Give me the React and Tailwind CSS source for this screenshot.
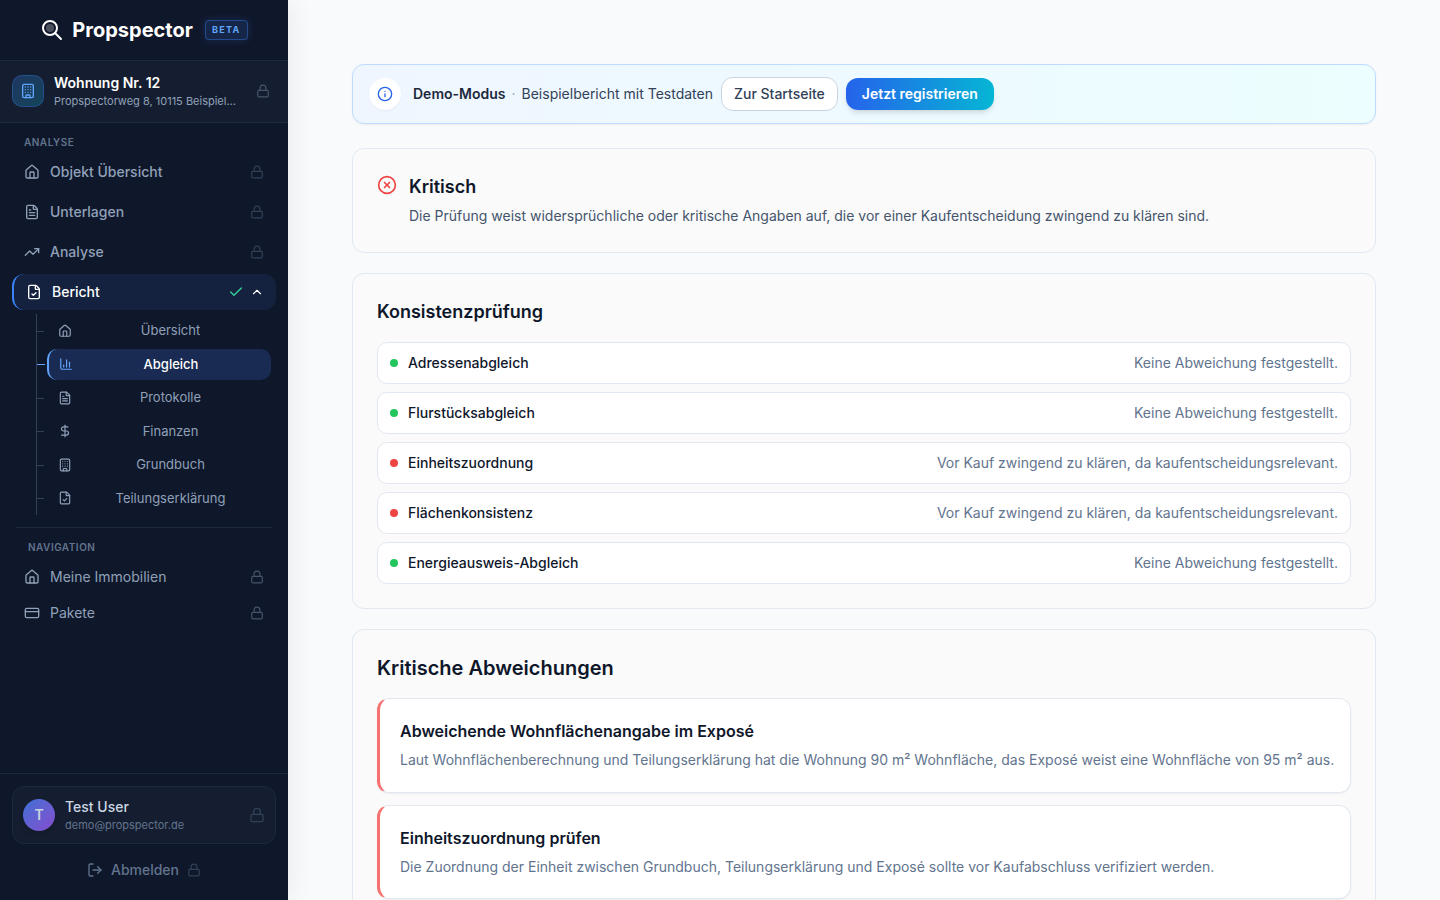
import {
  Building, ChartColumn, Check, ChevronUp, CircleX, CreditCard, DollarSign,
  FileCheck, FileText, House, Info, Lock, LogOut, TrendingUp,
} from 'lucide-react'
import clsx from 'clsx'

const ANALYSE_ITEMS = [
  { label: 'Objekt Übersicht', icon: House },
  { label: 'Unterlagen', icon: FileText },
  { label: 'Analyse', icon: TrendingUp },
]

const REPORT_ITEMS = [
  { label: 'Übersicht', icon: House },
  { label: 'Abgleich', icon: ChartColumn, active: true },
  { label: 'Protokolle', icon: FileText },
  { label: 'Finanzen', icon: DollarSign },
  { label: 'Grundbuch', icon: Building },
  { label: 'Teilungserklärung', icon: FileCheck },
]

const NAV_ITEMS = [
  { label: 'Meine Immobilien', icon: House },
  { label: 'Pakete', icon: CreditCard },
]

const OK_TEXT = 'Keine Abweichung festgestellt.'
const CRITICAL_TEXT = 'Vor Kauf zwingend zu klären, da kaufentscheidungsrelevant.'

const CHECKS = [
  { label: 'Adressenabgleich', ok: true },
  { label: 'Flurstücksabgleich', ok: true },
  { label: 'Einheitszuordnung', ok: false },
  { label: 'Flächenkonsistenz', ok: false },
  { label: 'Energieausweis-Abgleich', ok: true },
]

const DEVIATIONS = [
  {
    title: 'Abweichende Wohnflächenangabe im Exposé',
    text: 'Laut Wohnflächenberechnung und Teilungserklärung hat die Wohnung 90 m² Wohnfläche, das Exposé weist eine Wohnfläche von 95 m² aus.',
  },
  {
    title: 'Einheitszuordnung prüfen',
    text: 'Die Zuordnung der Einheit zwischen Grundbuch, Teilungserklärung und Exposé sollte vor Kaufabschluss verifiziert werden.',
  },
]

function Logo() {
  return (
    <svg width="24" height="24" viewBox="0 0 24 24" fill="none" className="shrink-0">
      <circle cx="10" cy="10" r="7" stroke="white" strokeWidth="2" />
      <circle cx="10" cy="10" r="4" fill="white" fillOpacity="0.25" />
      <path d="M15 15l6 6" stroke="white" strokeWidth="2" strokeLinecap="round" />
    </svg>
  )
}

function NavItem({ label, icon: Icon, className, lockClass }) {
  return (
    <button type="button" className={clsx('flex h-9 w-full items-center gap-2.5 rounded-xl px-3 text-sm text-slate-400', className)}>
      <Icon size={16} className="shrink-0" />
      <span className="flex-1 text-left">{label}</span>
      <Lock size={14} className={clsx('shrink-0', lockClass)} />
    </button>
  )
}

function ReportItem({ label, icon: Icon, active }) {
  return (
    <li
      className={clsx(
        'relative before:absolute before:top-1/2 before:left-0 before:h-px',
        active ? 'pl-2.5 before:w-2 before:bg-[#60a5fa]' : 'pl-[9px] before:w-[7px] before:bg-slate-700',
      )}
    >
      <button
        type="button"
        className={clsx(
          'flex w-full items-center gap-2.5 rounded-[10px] py-1.5 pr-3 text-[13px] leading-[1.5]',
          active
            ? 'border-l-2 border-[#60a5fa] bg-[#192b52] pl-2.5 font-medium text-white'
            : 'pl-3 text-slate-400',
        )}
      >
        <Icon size={14} className={clsx('shrink-0', active && 'text-[#60a5fa]')} />
        <span className="flex-1 text-center">{label}</span>
      </button>
    </li>
  )
}

function Sidebar() {
  return (
    <aside className="z-10 flex w-72 shrink-0 flex-col bg-[#0f172a] shadow-[4px_0_24px_rgba(0,0,0,0.06)]">
      <div className="flex h-[61px] items-center justify-center gap-2 border-b border-slate-800">
        <Logo />
        <span className="text-xl font-bold text-white">Propspector</span>
        <span className="ml-1 rounded border border-[#3b82f6]/40 bg-[#3b82f6]/15 px-1.5 py-0.5 text-[9px] leading-[14px] font-bold tracking-[0.15em] text-[#60a5fa] shadow-[0_0_8px_rgba(59,130,246,0.2)]">
          BETA
        </span>
      </div>

      {/* Current property */}
      <div className="flex h-[62px] items-center gap-2.5 border-b border-slate-800 bg-[#151e30] px-3 pb-px">
        <div className="flex size-8 shrink-0 items-center justify-center rounded-[10px] border border-[#3b82f6]/30 bg-linear-to-br from-[#3b82f6]/25 to-[#06b6d4]/25 text-[#60a5fa]">
          <Building size={16} />
        </div>
        <div className="min-w-0 flex-1">
          <p className="text-sm leading-5 font-semibold text-white">Wohnung Nr. 12</p>
          <p className="text-[11px] leading-4 whitespace-nowrap text-slate-400">Propspectorweg 8, 10115 Beispiel…</p>
        </div>
        <Lock size={14} className="mx-1.5 shrink-0 text-slate-600" />
      </div>

      <nav className="flex-1 px-3 pt-[11px]">
        <p className="px-3 text-[10px] leading-4 font-semibold tracking-wider text-slate-500">ANALYSE</p>
        <div className="mt-1 flex flex-col gap-1">
          {ANALYSE_ITEMS.map(item => (
            <NavItem key={item.label} {...item} className="font-medium" lockClass="text-slate-700" />
          ))}
          <button type="button" className="flex h-9 w-full items-center rounded-xl border-l-2 border-[#3b82f6] bg-[#142240] px-3 text-sm font-medium text-white">
            <FileCheck size={16} className="shrink-0" />
            <span className="ml-2.5 flex-1 text-left">Bericht</span>
            <Check size={16} className="mr-1.5 text-[#34d399]" />
            <ChevronUp size={14} />
          </button>
        </div>
        <ul className="mt-1 mr-[5px] ml-6 flex flex-col gap-0.5 border-l border-slate-700 py-px">
          {REPORT_ITEMS.map(item => (
            <ReportItem key={item.label} {...item} />
          ))}
        </ul>

        <div className="mx-1 mt-3 border-t border-slate-800 px-3 pt-[11px]">
          <p className="text-[10px] leading-4 font-semibold tracking-wider text-slate-500">NAVIGATION</p>
        </div>
        <div className="mt-1 flex flex-col">
          {NAV_ITEMS.map(item => (
            <NavItem key={item.label} {...item} lockClass="text-slate-600" />
          ))}
        </div>
      </nav>

      {/* User */}
      <div className="border-t border-slate-800 p-3">
        <div className="flex h-[58px] items-center gap-2.5 rounded-xl border border-slate-800 bg-[#151e30] px-2.5">
          <div className="flex size-8 shrink-0 items-center justify-center rounded-full bg-linear-to-br from-[#3470d4] to-[#834bd0] text-sm font-semibold text-slate-300 shadow-md">
            T
          </div>
          <div className="min-w-0 flex-1">
            <p className="text-sm leading-5 font-medium text-slate-300">Test User</p>
            <p className="truncate text-[11px] leading-4 text-slate-500">demo@propspector.de</p>
          </div>
          <Lock size={16} className="shrink-0 text-slate-700" />
        </div>
        <button type="button" className="mt-2 flex h-9 w-full items-center justify-center gap-2 text-sm font-medium text-slate-500">
          <LogOut size={16} />
          Abmelden
          <Lock size={14} className="text-slate-700" />
        </button>
      </div>
    </aside>
  )
}

function DemoBanner() {
  return (
    <div className="flex items-center rounded-xl border border-[#bfdbfe] bg-linear-to-r from-[#eff6ff] to-[#ecfeff] px-4 py-3 text-sm shadow-xs">
      <div className="mr-3 flex size-8 shrink-0 items-center justify-center rounded-full bg-white text-[#2563eb] shadow-xs">
        <Info size={16} />
      </div>
      <p className="mr-2 text-slate-700">
        <span className="font-semibold text-slate-800">Demo-Modus</span>
        <span className="mx-1.5 text-slate-400">·</span>
        Beispielbericht mit Testdaten
      </p>
      <button type="button" className="mr-2 h-[34px] rounded-xl border border-slate-300 bg-white px-3 font-medium text-slate-700">
        Zur Startseite
      </button>
      <button type="button" className="h-8 rounded-xl bg-linear-to-r/srgb from-[#2563eb] to-[#06b6d4] px-4 font-semibold text-white shadow-md">
        Jetzt registrieren
      </button>
    </div>
  )
}

export default function App() {
  return (
    <div className="flex h-screen bg-[#f8fafc] font-[Inter,sans-serif]">
      <Sidebar />
      <main className="min-w-0 flex-1 overflow-y-auto p-16 [scrollbar-width:none]">
        <DemoBanner />

        <div className="mt-6 flex flex-col gap-5">
          <section className="flex gap-3 rounded-xl border border-slate-200 bg-[#fafafa] p-6">
            <CircleX size={20} className="mt-0.5 shrink-0 text-[#ef4444]" />
            <div>
              <h2 className="text-lg leading-7 font-semibold text-slate-900">Kritisch</h2>
              <p className="mt-1 text-sm leading-relaxed text-slate-600">
                Die Prüfung weist widersprüchliche oder kritische Angaben auf, die vor einer Kaufentscheidung zwingend zu klären sind.
              </p>
            </div>
          </section>

          <section className="rounded-xl border border-slate-200 bg-[#fafafa] p-6">
            <h2 className="mb-4 text-lg leading-7 font-semibold text-slate-900">Konsistenzprüfung</h2>
            <ul className="flex flex-col gap-2">
              {CHECKS.map(({ label, ok }) => (
                <li key={label} className="flex items-center rounded-[10px] border border-slate-200 bg-white px-3 py-2.5 text-sm">
                  <span className={clsx('mr-2.5 size-2 rounded-full', ok ? 'bg-[#22c55e]' : 'bg-[#ef4444]')} />
                  <span className="flex-1 font-medium text-slate-900">{label}</span>
                  <span className="text-slate-500">{ok ? OK_TEXT : CRITICAL_TEXT}</span>
                </li>
              ))}
            </ul>
          </section>

          <section className="rounded-xl border border-slate-200 bg-[#fafafa] p-6">
            <h2 className="mb-4 text-xl leading-7 font-semibold text-slate-900">Kritische Abweichungen</h2>
            <div className="flex flex-col gap-3">
              {DEVIATIONS.map(({ title, text }) => (
                <article key={title} className="rounded-xl border border-l-3 border-slate-200 border-l-[#f87171] bg-white py-5 pr-2 pl-5 shadow-xs">
                  <h3 className="text-base font-semibold text-slate-900">{title}</h3>
                  <p className="mt-1.5 text-sm leading-relaxed text-slate-500">{text}</p>
                </article>
              ))}
            </div>
          </section>
        </div>
      </main>
    </div>
  )
}
